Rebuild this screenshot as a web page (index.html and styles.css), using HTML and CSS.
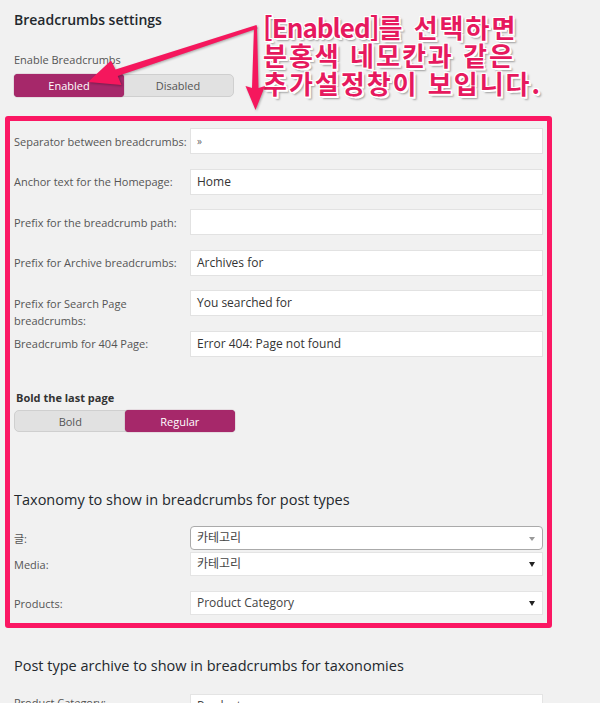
FILE: index.html
```html
<!DOCTYPE html>
<html lang="ko">
<head>
<meta charset="utf-8">
<title>Breadcrumbs settings</title>
<link rel="stylesheet" href="styles.css">
</head>
<body>
<div class="page">
  <h2 class="title">Breadcrumbs settings</h2>
  <div class="field-label">Enable Breadcrumbs</div>
  <div class="toggle">
    <span class="seg on">Enabled</span>
    <span class="seg">Disabled</span>
  </div>

  <div class="box">
    <div class="row"><label>Separator between breadcrumbs:</label><div class="input small">»</div></div>
    <div class="row"><label>Anchor text for the Homepage:</label><div class="input">Home</div></div>
    <div class="row"><label>Prefix for the breadcrumb path:</label><div class="input"></div></div>
    <div class="row"><label>Prefix for Archive breadcrumbs:</label><div class="input">Archives for</div></div>
    <div class="row"><label>Prefix for Search Page<br>breadcrumbs:</label><div class="input">You searched for</div></div>
    <div class="row"><label>Breadcrumb for 404 Page:</label><div class="input">Error 404: Page not found</div></div>

    <div class="bold-label">Bold the last page</div>
    <div class="toggle toggle2">
      <span class="seg">Bold</span>
      <span class="seg on">Regular</span>
    </div>

    <h3 class="section">Taxonomy to show in breadcrumbs for post types</h3>
    <div class="srow first"><label>글:</label><div class="select s2">카테고리<span class="caret gray"></span></div></div>
    <div class="srow media"><label>Media:</label><div class="select">카테고리<span class="caret"></span></div></div>
    <div class="srow products"><label>Products:</label><div class="select">Product Category<span class="caret"></span></div></div>
  </div>

  <h3 class="section section2">Post type archive to show in breadcrumbs for taxonomies</h3>
  <div class="srow last"><label>Product Category:</label><div class="select">Products<span class="caret"></span></div></div>
</div>

<div class="note">
  <div><span class="latin">[Enabled]</span>를 선택하면</div>
  <div>분홍색 네모칸과 같은</div>
  <div>추가설정창이 보입니다.</div>
</div>

<svg class="arrows" width="600" height="130" viewBox="0 0 600 130">
  <polygon points="256.5,25 115.5,69.5 111,60.5 88,82 121.5,85 117.7,76.1 257.5,28.5" />
  <polygon points="254,27 257,27 258.5,88 265,86 255.5,110 245.5,86 252,88" />
</svg>
</body>
</html>
```

FILE: styles.css
```css
html, body {
  margin: 0;
  padding: 0;
  background: #f1f1f1;
}

body {
  width: 600px;
  height: 703px;
  overflow: hidden;
  position: relative;
  font-family: "Open Sans", "Noto Sans", "Noto Sans CJK KR", sans-serif;
  color: #444;
}

.page {
  padding: 10px 0 0 14px;
}

.title {
  margin: 0;
  font-size: 14px;
  line-height: 20px;
  font-weight: 600;
  color: #23282d;
}

.field-label {
  margin-top: 22px;
  font-size: 11px;
  line-height: 16px;
  color: #555;
}

.toggle {
  margin-top: 6px;
  width: 220px;
  height: 23px;
  box-sizing: border-box;
  display: flex;
  background: #e1e1e1;
  border: 1px solid #cfcfcf;
  border-radius: 5px;
}

.seg {
  flex: 1;
  display: flex;
  align-items: center;
  justify-content: center;
  font-size: 11px;
  color: #555;
}

.seg.on {
  background: #a6286a;
  color: #fff;
  border-radius: 4px;
  margin: -1px;
  box-shadow: 0 0 1px #7a1d4e;
}

.box {
  margin: 19px 0 0 -9px;
  width: 547px;
  box-sizing: border-box;
  border: 5px solid #fb1763;
  border-radius: 3px;
  padding: 7px 4px 8px 4px;
}

.row {
  display: flex;
  height: 40.6px;
  align-items: flex-start;
}

.row label, .srow label {
  width: 176px;
  flex: none;
  font-size: 11px;
  line-height: 17px;
  color: #555;
  white-space: nowrap;
}

.row label {
  padding-top: 4.5px;
  box-sizing: border-box;
}

.input {
  flex: 1;
  height: 26px;
  box-sizing: border-box;
  background: #fff;
  border: 1px solid #e2e2e2;
  padding: 0 6px;
  font-size: 12px;
  line-height: 24px;
  color: #333;
}

.input.small {
  font-size: 10px;
  color: #666;
}

.bold-label {
  margin-top: 18.5px;
  padding-left: 2px;
  font-size: 11px;
  line-height: 16px;
  font-weight: 700;
  color: #333;
}

.toggle2 {
  margin-top: 4px;
  width: 221px;
  height: 22px;
}

.section {
  margin: 57px 0 0 0;
  font-size: 14.5px;
  line-height: 22px;
  font-weight: 500;
  color: #23282d;
}

.srow {
  display: flex;
  align-items: center;
}

.srow.first { margin-top: 15px; }
.srow.media { margin-top: 2px; }
.srow.products { margin-top: 15px; }

.select {
  flex: 1;
  position: relative;
  height: 24px;
  box-sizing: border-box;
  background: #fff;
  border: 1px solid #e4e4e4;
  padding: 0 6px;
  font-family: "Open Sans", "Noto Sans CJK KR", sans-serif;
  font-size: 12px;
  line-height: 22px;
  color: #444;
}

.select.s2 {
  border: 1px solid #aaa;
  border-radius: 4px;
}

.caret {
  position: absolute;
  right: 7px;
  top: 9px;
  width: 0;
  height: 0;
  border-left: 3px solid transparent;
  border-right: 3px solid transparent;
  border-top: 5px solid #222;
}

.caret.gray {
  border-top-color: #999;
  top: 10px;
  border-top-width: 4px;
}

.section2 {
  margin-top: 27px;
}

.srow.last {
  margin-top: 17px;
  margin-right: 57px;
}

.srow.last label {
  align-self: flex-start;
}

.note {
  position: absolute;
  left: 263px;
  top: 13px;
  font-family: "Noto Sans CJK KR", "Noto Sans", sans-serif;
  font-weight: 700;
  font-size: 26px;
  line-height: 28px;
  letter-spacing: 2px;
  color: #e6195e;
  white-space: nowrap;
  text-shadow:
    1px 0 0 #fff, -1px 0 0 #fff, 0 1px 0 #fff, 0 -1px 0 #fff,
    1px 1px 0 #fff, -1px -1px 0 #fff, 1px -1px 0 #fff, -1px 1px 0 #fff,
    2px 2px 0 #fff, 3px 3px 2px rgba(0, 0, 0, 0.35);
}

.note .latin {
  letter-spacing: -1px;
}

.arrows {
  position: absolute;
  left: 0;
  top: 0;
  fill: #f5175d;
  filter: drop-shadow(1px 1px 1px rgba(0, 0, 0, 0.3));
  pointer-events: none;
}
```
